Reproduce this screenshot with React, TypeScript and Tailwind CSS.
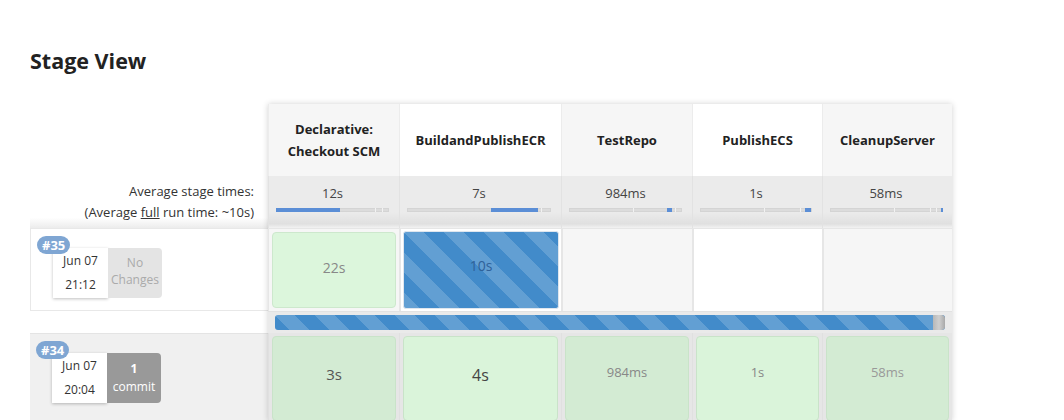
import React from 'react';

type Stage = {
  name: string[];
  shade: boolean;
  avg: string;
  fill: { left: number; width: number };
  ticks: number[];
  run34: { text: string; size: string; color: string };
};

const stages: Stage[] = [
  {
    name: ['Declarative:', 'Checkout SCM'],
    shade: true,
    avg: '12s',
    fill: { left: 0, width: 57 },
    ticks: [88, 94],
    run34: { text: '3s', size: 'text-[15px]', color: 'text-[#555]' },
  },
  {
    name: ['BuildandPublishECR'],
    shade: false,
    avg: '7s',
    fill: { left: 58, width: 33 },
    ticks: [93],
    run34: { text: '4s', size: 'text-[16px]', color: 'text-[#444]' },
  },
  {
    name: ['TestRepo'],
    shade: true,
    avg: '984ms',
    fill: { left: 87, width: 4 },
    ticks: [57, 94],
    run34: { text: '984ms', size: 'text-[13px]', color: 'text-[#888]' },
  },
  {
    name: ['PublishECS'],
    shade: false,
    avg: '1s',
    fill: { left: 94, width: 5 },
    ticks: [57, 89],
    run34: { text: '1s', size: 'text-[13px]', color: 'text-[#888]' },
  },
  {
    name: ['CleanupServer'],
    shade: true,
    avg: '58ms',
    fill: { left: 99, width: 1 },
    ticks: [57, 89, 95],
    run34: { text: '58ms', size: 'text-[13px]', color: 'text-[#999]' },
  },
];

const colWidth = ['w-[131px]', 'w-[162px]', 'w-[131px]', 'w-[130px]', 'w-[130px]'];

const stripes =
  'bg-[#428bca] bg-[linear-gradient(45deg,rgba(255,255,255,0.17)_25%,transparent_25%,transparent_50%,rgba(255,255,255,0.17)_50%,rgba(255,255,255,0.17)_75%,transparent_75%,transparent)] bg-[length:40px_40px]';

function BuildInfo({ num, date, time, changes }: { num: string; date: string; time: string; changes: React.ReactNode }) {
  return (
    <div className="relative pt-[19px] pl-[22px]">
      <span className="absolute left-[6px] top-[7px] z-10 rounded-full bg-[#7fa6d3] px-[5px] text-[13px] font-bold leading-[18px] text-white">
        {num}
      </span>
      <div className="flex h-[50px]">
        <div className="flex w-[55px] flex-col items-center justify-center gap-[10px] bg-white text-[12px] leading-[14px] text-[#333] shadow-[0_1px_3px_rgba(0,0,0,0.25)]">
          <span>{date}</span>
          <span>{time}</span>
        </div>
        {changes}
      </div>
    </div>
  );
}

export default function App() {
  return (
    <div className="min-h-[420px] bg-white pl-[30px] pt-[46px] font-['Open_Sans',sans-serif] text-[#333]">
      <h2 className="text-[21.5px] font-bold leading-[30px] text-[#222]">Stage View</h2>

      <div className="mt-[28px] flex">
        {/* Left column */}
        <div className="w-[238px] shrink-0">
          <div className="h-[72px]" />
          <div className="flex h-[52px] flex-col items-end justify-center bg-[linear-gradient(to_bottom,#fff_80%,#ececec)] pr-[14px] text-[13px] leading-[21px] text-[#333]">
            <span>Average stage times:</span>
            <span>
              (Average <span className="underline">full</span> run time: ~10s)
            </span>
          </div>
          <div className="h-[83px] border border-r-0 border-[#e8e8e8] bg-white">
            <BuildInfo
              num="#35"
              date="Jun 07"
              time="21:12"
              changes={
                <div className="flex w-[54px] flex-col items-center justify-center rounded-r-[4px] bg-[#e4e4e4] pb-[4px] text-[12px] leading-[17px] text-[#aaa]">
                  <span>No</span>
                  <span>Changes</span>
                </div>
              }
            />
          </div>
          <div className="h-[22px] bg-white" />
          <div className="h-[88px] border-t border-[#e4e4e4] bg-[#f0f0f0]">
            <BuildInfo
              num="#34"
              date="Jun 07"
              time="20:04"
              changes={
                <div className="flex w-[54px] flex-col items-center justify-center rounded-r-[4px] bg-[#999] text-[12px] leading-[18px] text-white">
                  <span className="font-bold">1</span>
                  <span>commit</span>
                </div>
              }
            />
          </div>
        </div>

        {/* Stage columns */}
        <div className="flex flex-col shadow-[0_0_6px_rgba(0,0,0,0.18)]">
          {/* header */}
          <div className="flex h-[72px]">
            {stages.map((s, i) => (
              <div
                key={i}
                className={`${colWidth[i]} flex flex-col items-center justify-center border-l border-[#ececec] text-[13px] font-bold leading-[22px] text-[#222] ${
                  s.shade ? 'bg-[#f6f6f6]' : 'bg-white'
                }`}
              >
                {s.name.map((n) => (
                  <span key={n}>{n}</span>
                ))}
              </div>
            ))}
          </div>

          {/* averages */}
          <div className="flex h-[52px]">
            {stages.map((s, i) => (
              <div
                key={i}
                className={`${colWidth[i]} flex flex-col border-l border-[#e2e2e2] bg-[linear-gradient(to_bottom,#ebebeb_70%,#e0e0e0_92%,#f2f2f2)] px-[7px] pr-[10px] pt-[8px]`}
              >
                <div className="text-center text-[13px] leading-[19px] text-[#444]">{s.avg}</div>
                <div className="relative mt-[5px] h-[4px] bg-[#dcdcdc] shadow-[inset_0_0_0_1px_#d4d4d4]">
                  {s.ticks.map((t) => (
                    <span key={t} className="absolute top-0 h-full w-[1px] bg-[#f2f2f2]" style={{ left: `${t}%` }} />
                  ))}
                  <span
                    className="absolute top-0 h-full bg-[#5b8ed6]"
                    style={{ left: `${s.fill.left}%`, width: `${s.fill.width}%`, minWidth: '2px' }}
                  />
                </div>
              </div>
            ))}
          </div>

          {/* run #35 */}
          <div className="flex h-[83px]">
            <div className={`${colWidth[0]} border-l border-t border-[#e6e6e6] bg-[#f6f6f6] p-[3px]`}>
              <div className="flex h-full items-start justify-center rounded-[4px] border border-[#cde8cd] bg-[#dcf6dc] pt-[24px] text-[14px] text-[#888]">
                22s
              </div>
            </div>
            <div className={`${colWidth[1]} border-l-2 border-t border-[#e6e6e6] bg-white p-[2px]`}>
              <div
                className={`flex h-full items-start justify-center rounded-[3px] border border-[#dfe6ee] ${stripes} pt-[23px] text-[14px] text-[#2f6199]`}
              >
                10s
              </div>
            </div>
            <div className={`${colWidth[2]} border-l-2 border-t border-[#e6e6e6] bg-[#f6f6f6]`} />
            <div className={`${colWidth[3]} border-l-2 border-t border-[#e6e6e6] bg-white`} />
            <div className={`${colWidth[4]} border-l-2 border-t border-[#e6e6e6] bg-[#f6f6f6]`} />
          </div>

          {/* progress */}
          <div className="flex h-[22px] items-center border-t border-[#e2e2e2] bg-[#eaeaea] px-[7px]">
            <div className={`flex h-[15px] flex-1 overflow-hidden rounded-[3px] ${stripes}`}>
              <div className="flex-1" />
              <div className="w-[12px] rounded-r-[3px] bg-[linear-gradient(to_right,#b8b8b8,#cfcfcf_50%,#a9a9a9)]" />
            </div>
          </div>

          {/* run #34 */}
          <div className="flex h-[88px] bg-[#e6e6e6]">
            {stages.map((s, i) => (
              <div key={i} className={`${colWidth[i]} border-l border-[#e0e0e0] p-[3px] pb-0`}>
                <div
                  className={`flex h-full items-start justify-center rounded-[4px] border border-[#c9e3c9] pt-[26px] ${
                    s.shade ? 'bg-[#d3ebd3]' : 'bg-[#daf4da]'
                  } ${s.run34.size} ${s.run34.color}`}
                >
                  {s.run34.text}
                </div>
              </div>
            ))}
          </div>
        </div>
      </div>
    </div>
  );
}
